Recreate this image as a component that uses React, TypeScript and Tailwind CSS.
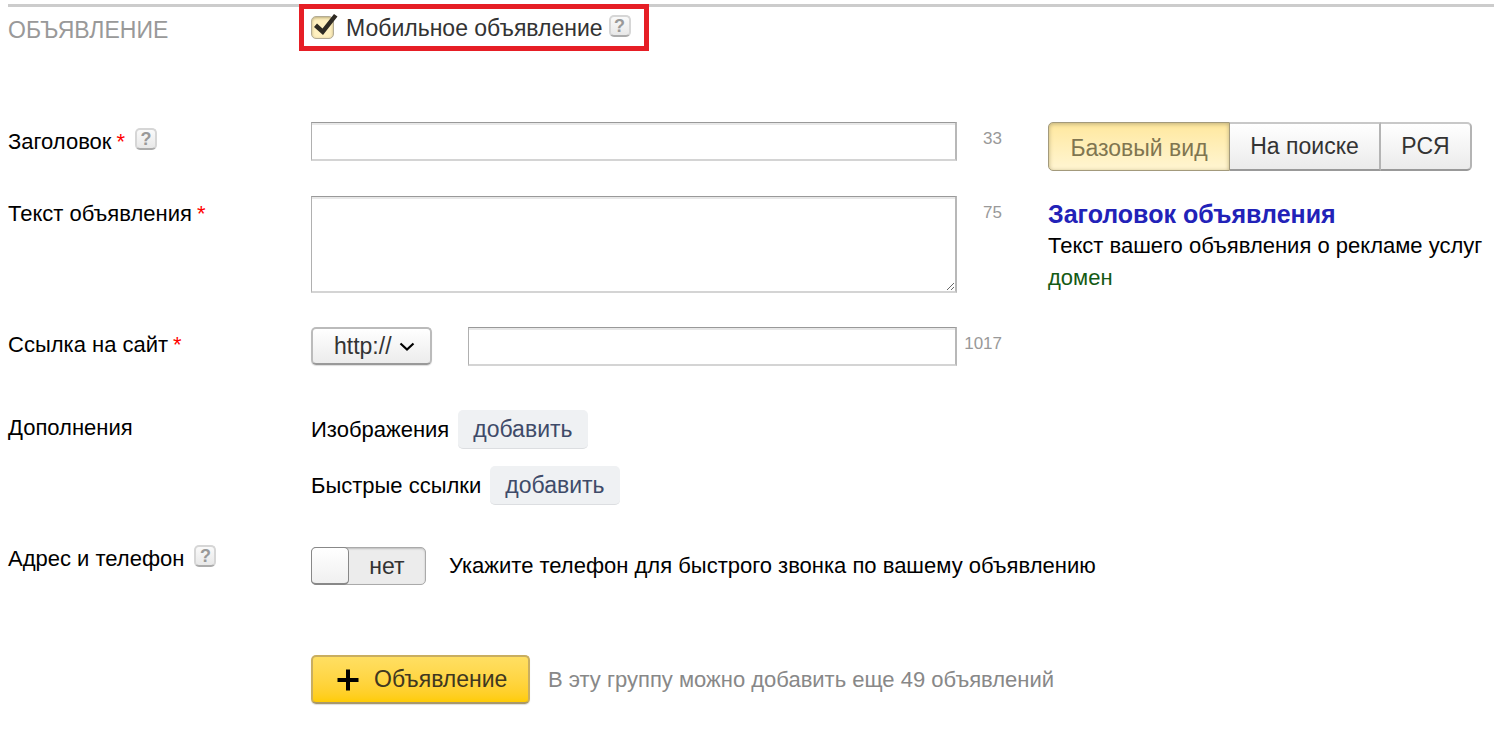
import { useState, type ReactNode } from "react";

const views = ["Базовый вид", "На поиске", "РСЯ"];

function Help() {
  return (
    <button
      type="button"
      aria-label="Справка"
      className="h-[22px] w-[22px] shrink-0 rounded-[5px] border-2 border-[#d6d6d6] border-b-[#acacac] bg-gradient-to-b from-[#fafafa] to-[#e8e8e8] text-center text-lg font-bold leading-[18px] text-[#999]"
    >
      ?
    </button>
  );
}

function Required() {
  return <span className="ml-[5px] text-[#f00]">*</span>;
}

type RowProps = {
  label: ReactNode;
  className?: string;
  children: ReactNode;
};

function Row({ label, className = "", children }: RowProps) {
  return (
    <div className={`flex items-start ${className}`}>
      <div className="flex w-[303px] shrink-0 items-center leading-9">{label}</div>
      {children}
    </div>
  );
}

function Counter({ value }: { value: number }) {
  return (
    <span className="w-[91px] shrink-0 pr-[46px] text-right text-[17px] leading-[34px] text-[#999]">
      {value}
    </span>
  );
}

const fieldStyle =
  "block border-2 border-t border-l border-[#d4d4d4] border-t-[#999] border-l-[#b0b0b0] border-r-[#b8b8b8] bg-white px-2 shadow-[inset_0_2px_0_#e8e8e8] outline-none";

function AddButton() {
  return (
    <button
      type="button"
      className="h-[39px] rounded-[5px] border-b border-[#dcdee1] bg-[#eff1f3] px-[15px] text-[23px] text-[#3f4b69]"
    >
      добавить
    </button>
  );
}

export default function App() {
  const [view, setView] = useState(views[0]);

  return (
    <form className="bg-white pl-2 font-['Liberation_Sans',Arial,sans-serif] text-[22px] text-black">
      {/* Header */}
      <div className="pt-1">
        <div className="h-[3px] bg-[#ccc]" />
        <div className="-mt-[3px] flex items-start">
          <h2 className="w-[291px] shrink-0 pt-[9px] text-[23px] leading-[34px] text-[#999]">ОБЪЯВЛЕНИЕ</h2>
          <div className="relative flex h-[47px] w-[350px] items-center border-[5px] border-[#e61e25] pl-[7px]">
            <label className="flex items-center text-[23px] leading-9 text-[#333]">
              <span className="relative mr-[11px] h-6 w-6">
                <input
                  type="checkbox"
                  defaultChecked
                  className="peer block h-[23px] w-[23px] appearance-none rounded-[5px] border border-[#b3ab95] bg-[#fff0c0] shadow-[inset_0_1px_3px_#b8aa78]"
                />
                <svg
                  viewBox="0 0 26 24"
                  className="pointer-events-none absolute -top-[2px] left-[2px] hidden h-6 w-[26px] peer-checked:block"
                >
                  <path d="M1 13 L4 9.500 L9.500 14.500 L21 0 L24.500 2.500 L10 21 Z" fill="#2f2b24" />
                </svg>
              </span>
              Мобильное объявление
            </label>
            <span className="mb-[3px] ml-[6px] flex">
              <Help />
            </span>
          </div>
        </div>
      </div>

      {/* Main fields and preview */}
      <div className="mt-[71px] flex items-start">
        <div className="min-w-0 flex-1">
          <Row
            label={
              <>
                <label htmlFor="title" className="pt-[2px]">
                  Заголовок
                  <Required />
                </label>
                <span className="mb-1 ml-[10px] flex">
                  <Help />
                </span>
              </>
            }
          >
            <input id="title" className={`${fieldStyle} h-[39px] min-w-0 flex-1`} />
            <Counter value={33} />
          </Row>
          <Row
            className="mt-[35px]"
            label={
              <label htmlFor="text">
                Текст объявления
                <Required />
              </label>
            }
          >
            <textarea id="text" className={`${fieldStyle} h-[97px] min-w-0 flex-1 resize`} />
            <Counter value={75} />
          </Row>
          <Row
            className="mt-[34px]"
            label={
              <label htmlFor="url">
                Ссылка на сайт
                <Required />
              </label>
            }
          >
            <div className="relative mr-9 w-[121px] shrink-0">
              <select
                aria-label="Протокол"
                className="h-[38px] w-full appearance-none rounded-[5px] border-2 border-[#bbb] border-b-[#999] bg-gradient-to-b from-white to-[#ececec] pl-[21px] text-[23px] leading-[34px] text-[#333] shadow-[0_1px_1px_#ddd]"
              >
                <option>http://</option>
                <option>https://</option>
              </select>
              <svg viewBox="0 0 16 10" className="pointer-events-none absolute top-[15px] right-[17px] h-[10px] w-4">
                <path d="M1.500 1.500 L8 7.500 L14.500 1.500" fill="none" stroke="#000" strokeWidth="2.200" />
              </svg>
            </div>
            <input id="url" className={`${fieldStyle} h-[39px] min-w-0 flex-1`} />
            <Counter value={1017} />
          </Row>
        </div>

        <aside className="w-[446px] shrink-0">
          <div className="flex h-[49px] w-[424px] text-[23px] text-[#333]">
            {views.map((name) => (
              <button
                key={name}
                type="button"
                aria-pressed={view === name}
                onClick={() => setView(name)}
                className={`w-[151px] first:w-[182px] first:rounded-l-[5px] last:w-[91px] last:rounded-r-[5px] ${
                  view === name
                    ? "border border-[#a39a7c] bg-gradient-to-b from-[#ffe89e] to-[#fff5d2] pt-1 text-[#807550] shadow-[inset_0_1px_4px_#bdae7c]"
                    : "border-y-2 border-r-2 border-[#b4b4b4] border-t-[#c8c8c8] border-b-[#999] bg-gradient-to-b from-white to-[#ebebeb] first:border-l-2"
                }`}
              >
                {name}
              </button>
            ))}
          </div>
          <div className="mt-[27px] whitespace-nowrap">
            <a href="#" className="block text-[25px] font-bold leading-8 text-[#2222b8]">
              Заголовок объявления
            </a>
            <p className="leading-8">Текст вашего объявления о рекламе услуг</p>
            <a href="#" className="block leading-8 text-[#145a14]">
              домен
            </a>
          </div>
        </aside>
      </div>

      {/* Extras */}
      <Row className="mt-[44px]" label="Дополнения">
        <div className="flex flex-col gap-[17px]">
          <div className="flex items-center gap-[9px]">
            Изображения
            <AddButton />
          </div>
          <div className="flex items-center gap-[9px]">
            Быстрые ссылки
            <AddButton />
          </div>
        </div>
      </Row>

      <Row
        className="mt-[42px]"
        label={
          <div className="flex items-start gap-[10px] leading-6">
            Адрес и телефон
            <span className="-mt-[2px] flex">
              <Help />
            </span>
          </div>
        }
      >
        <label className="flex h-[38px] w-[115px] shrink-0 rounded-[5px] border border-[#aaa] bg-[#ececec] text-[23px] leading-9 text-[#333] shadow-[inset_0_1px_2px_#bbb]">
          <input type="checkbox" role="switch" className="sr-only" />
          <span className="-my-px -ml-px h-[38px] w-[38px] rounded-[5px] border border-b-2 border-[#888] bg-gradient-to-b from-white to-[#f0f0f0]" />
          <span className="flex-1 text-center">нет</span>
        </label>
        <p className="ml-[23px] leading-[38px]">Укажите телефон для быстрого звонка по вашему объявлению</p>
      </Row>

      {/* Add to group */}
      <div className="mt-[70px] flex items-center pb-6 pl-[303px]">
        <button
          type="button"
          className="flex h-[49px] w-[219px] items-center rounded-[5px] border-2 border-[#c9ae60] border-b-[#a8986a] bg-gradient-to-b from-[#ffdf62] to-[#fc0] pl-6 text-[23px] text-[#403720] shadow-[0_1px_1px_#ddd]"
        >
          <svg viewBox="0 0 22 22" className="mr-[15px] h-[22px] w-[22px]">
            <path d="M11 0.500 V21.500 M0.500 11 H21.500" stroke="#000" strokeWidth="4" />
          </svg>
          Объявление
        </button>
        <p className="ml-[18px] text-[#888]">В эту группу можно добавить еще 49 объявлений</p>
      </div>
    </form>
  );
}
